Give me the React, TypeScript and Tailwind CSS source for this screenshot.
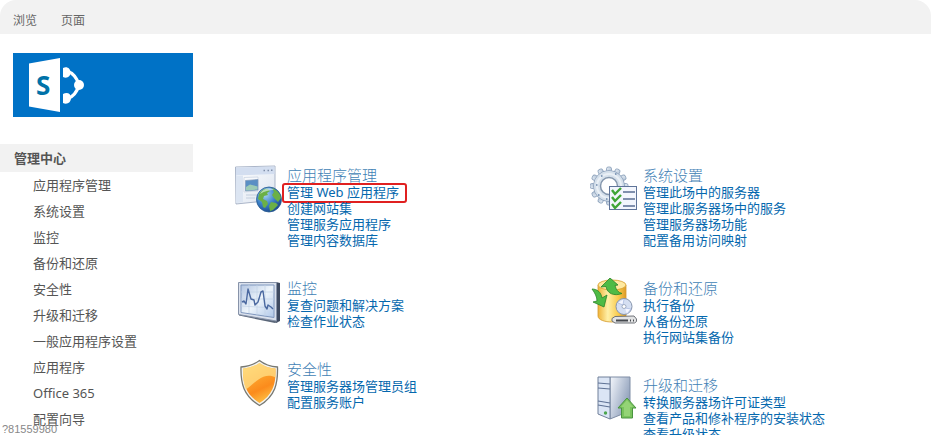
import type { ReactNode } from 'react';

interface AdminLink {
    name: string;
    marked?: boolean;
}

interface AdminSection {
    title: string;
    icon: () => ReactNode;
    links: AdminLink[];
}

const SharePointLogo = () => (
    <svg viewBox="0 0 180 64" className="block w-full" role="img" aria-label="SharePoint">
        <rect width="180" height="64" fill="#0072c6" />
        <path d="M16 10.5 47 5v54L16 53.5Z" fill="#fff" />
        <text x="23" y="41.500" fontSize="26" fill="#0072a8" className="font-['Open_Sans',sans-serif] font-bold">S</text>
        <path d="M54 18c6 2 10 7 12 14-2 7-6 12-12 14" fill="none" stroke="#fff" strokeWidth="3.200" />
        <path d="M50 15c4-2 7.500.5 7.500 4.500s-3.500 6.500-7.500 4.500ZM50 41c4-2.500 8-.5 8 4s-4 7-8 5Z" fill="#fff" />
        <circle cx="66" cy="32" r="5" fill="#fff" />
    </svg>
);

const AppManagementIcon = () => (
    <svg viewBox="0 0 48 48" className="block size-12" aria-hidden="true">
        <defs>
            <linearGradient id="win" x1="0" y1="0" x2="1" y2="1">
                <stop offset="0" stopColor="#fff" />
                <stop offset="1" stopColor="#dbe3ef" />
            </linearGradient>
            <radialGradient id="globe" cx=".35" cy=".3" r=".8">
                <stop offset="0" stopColor="#a9d6f5" />
                <stop offset=".5" stopColor="#3d82c8" />
                <stop offset="1" stopColor="#153f83" />
            </radialGradient>
        </defs>
        <path d="M1.500 2 41 1v34L2 39Z" fill="url(#win)" stroke="#aab5c8" />
        <path d="M2 2.500 40.500 1.500V9L2 10.500Z" fill="#d3def0" />
        <path d="M29.500 5.500h1.500M33.500 5.500h1.500M37 5.300h1.500" stroke="#7f8ea8" strokeWidth="1.500" />
        <path d="M2 11v27l7-.7V10.500Z" fill="#dce5f2" />
        <path d="M10 12.500 24 12v14L10 27Z" fill="#f7f9fc" stroke="#c0cbdb" strokeWidth=".6" />
        <path d="M11.500 15.500 24 14.500v10.500L11.500 26Z" fill="#5a8fc4" stroke="#8198b8" strokeWidth=".7" />
        <path d="m12 22 4-2.500 7.500 2v3L12 25.500Z" fill="#9ccbb4" />
        <path d="M12 30h11M12 33h9" stroke="#c3cedd" />
        <circle cx="35" cy="34.500" r="12.500" fill="url(#globe)" stroke="#275b91" strokeWidth=".8" />
        <path
            d="M25 29c2-4 6-6 9-5l2 2-3 2 1 2-4 1-1 3 4 2 1 3-3 4-2-1-1-5-4-3ZM38 23c5 2 8 5 9 10l-3 4-4-4-2-3 2-3ZM37 37l5 1 2 2-5 5-3 1-1-5Z"
            fill="#6bb046"
        />
        <path d="M26 29c3-6 10-7 14-4-5 0-9 1-14 4Z" fill="#e5f6ff" opacity=".6" />
    </svg>
);

const MonitoringIcon = () => (
    <svg viewBox="0 0 48 48" className="block size-12" aria-hidden="true">
        <defs>
            <linearGradient id="screen" x1="0" y1="0" x2="1" y2="1">
                <stop offset="0" stopColor="#b4c6e2" />
                <stop offset=".5" stopColor="#eef5fb" />
                <stop offset="1" stopColor="#b0c7e8" />
            </linearGradient>
        </defs>
        <path d="m42 4 4 1v38l-4 2Z" fill="#3e4a60" />
        <path d="m5 35.500 37 7 2 1.500-3 1L5 37.500Z" fill="#5a6678" />
        <path d="M4.500 4.500h38V43l-38-6.500Z" fill="#dae1ed" stroke="#8793a9" />
        <path d="M7 7h33v32.500L7 34.500Z" fill="url(#screen)" stroke="#8098be" />
        <path d="M7 14h33M7 21h33M7 28l33 2M15 7v28M23 7v30M31 7v31" stroke="#c0d1e5" strokeWidth=".7" />
        <path
            d="m8 24 2-1 2 3 2-15 3 10 3 1 1 5 3-3 3-10 2-1 2 15 2 3 1-4 3 2 2 2"
            fill="none"
            stroke="#4b69a0"
            strokeWidth="1.400"
            strokeLinejoin="round"
        />
    </svg>
);

const SecurityIcon = () => (
    <svg viewBox="0 0 48 48" className="block size-12" aria-hidden="true">
        <defs>
            <linearGradient id="shield" x1="0" y1="0" x2=".4" y2="1">
                <stop offset="0" stopColor="#ffd25c" />
                <stop offset=".4" stopColor="#fda62f" />
                <stop offset=".75" stopColor="#fb8b1c" />
                <stop offset="1" stopColor="#fdb53c" />
            </linearGradient>
        </defs>
        <path
            d="M25.500 1.500c5 4 11 6 18 6.500.5 16-2 29-18 38.500C9.500 37 6.500 24 7 8c7-.5 13-2.500 18.500-6.500Z"
            fill="#f2f2ee"
            stroke="#777872"
            strokeWidth="1.300"
        />
        <path d="M25.500 4c5 3.500 10 5 16 5.500.5 14-2 26-16 34.500C11.500 35.500 8.500 24 9 9.500c6-.5 11.500-2 16.500-5.500Z" fill="url(#shield)" />
        <path d="M25.500 4c5 3.500 10 5 16 5.500v9c-5-3-12-2-17 2-6 4-9 8-13 10-2-6-2.500-13-2.500-21 6-.5 11.500-2 16.500-5.500Z" fill="#ffe08a" opacity=".75" />
    </svg>
);

const SystemSettingsIcon = () => (
    <svg viewBox="0 0 48 48" className="block size-12" aria-hidden="true">
        <defs>
            <linearGradient id="gear" x1="0" y1="0" x2="1" y2="1">
                <stop offset="0" stopColor="#e9f0f7" />
                <stop offset="1" stopColor="#a3b6cc" />
            </linearGradient>
        </defs>
        {/* 12 rounded teeth round the rim */}
        <g fill="url(#gear)" stroke="#8ea3bc" strokeWidth=".9" transform="translate(19 21)">
            {[0, 30, 60, 90, 120, 150, 180, 210, 240, 270, 300, 330].map((angle) => (
                <rect key={angle} x="-2.500" y="-19" width="5" height="7" rx="1.800" transform={`rotate(${angle})`} />
            ))}
            <circle r="15.500" />
        </g>
        <circle cx="19" cy="21" r="14.800" fill="#d5e0eb" />
        <circle cx="19" cy="21" r="12" fill="none" stroke="#eaf0f6" strokeWidth="2" />
        <circle cx="19" cy="21" r="8.500" fill="#fff" stroke="#8597ad" strokeWidth="1.500" />
        <path d="M11 11h1.500M25 9h1.500M6 20h1.500M8 30h1.500M16 34h1.500" stroke="#6a86ab" strokeWidth="1.600" />
        <rect x="19.500" y="21.500" width="27" height="23" fill="#f3f6fd" stroke="#5f7499" />
        <path d="M33 27h12M33 34h12M33 41h12" stroke="#5a6e92" strokeWidth="1.300" />
        <path d="m22 25 3 4 6-6M22 32l3 4 6-6M22 39l3 4 6-6" fill="none" stroke="#3fa535" strokeWidth="2.400" />
    </svg>
);

const BackupIcon = () => (
    <svg viewBox="0 0 48 48" className="block size-12" aria-hidden="true">
        <defs>
            <linearGradient id="drum">
                <stop offset="0" stopColor="#efb338" />
                <stop offset=".35" stopColor="#fff0a8" />
                <stop offset=".75" stopColor="#f8c846" />
                <stop offset="1" stopColor="#dd9a28" />
            </linearGradient>
        </defs>
        <path d="M8 7v31c0 8 28 8 28 0V7Z" fill="url(#drum)" stroke="#d49a30" strokeWidth=".8" />
        <ellipse cx="22" cy="7" rx="14" ry="5" fill="#ffe9a0" stroke="#d69c2b" strokeWidth=".8" />
        <path d="m20 0 8 7-3 .5c1 4 3 7 7 8-8 3-15 0-16-7l-5 .5Z" fill="#4fbb45" stroke="#2a8428" strokeWidth=".8" />
        <path d="M2 11c5 0 9 3 10 9l5-3-3 12-11-5 4-1c0-4-2-8-5-12Z" fill="#4fbb45" stroke="#2a8428" strokeWidth=".8" />
        <circle cx="34" cy="28.500" r="8" fill="#d5dff2" stroke="#8795ad" />
        <path d="m28 25 5 2 1-6M35 30l6 1-4 5" fill="#f4f6ff" stroke="#a4b5dd" strokeWidth=".7" />
        <circle cx="34" cy="28.500" r="2" fill="#fff" stroke="#8795ad" strokeWidth=".7" />
        <path d="m25 38.500 19-.5 2.500 3v2.500L44.500 45H25l-3-2v-2.500Z" fill="#e2e3e4" stroke="#6f7278" />
        <path d="M26 42.500h12M40 42.500h1M43 42.500h1" stroke="#45494e" strokeWidth="1.800" />
    </svg>
);

const UpgradeIcon = () => (
    <svg viewBox="0 0 48 48" className="block size-12" aria-hidden="true">
        <defs>
            <linearGradient id="tower" x1="0" y1="0" x2="1" y2=".6">
                <stop offset="0" stopColor="#f4f7fc" />
                <stop offset="1" stopColor="#8b9cb8" />
            </linearGradient>
        </defs>
        <path d="M20 2h20v34l-20 8Z" fill="url(#tower)" stroke="#7f8da5" />
        <path d="M8 2h12v42L8 39Z" fill="#dbe5f5" stroke="#71809a" />
        <path d="m8 8 12 1M8 13l12 1M8 26l12 2M8 30l12 2" stroke="#5f7295" strokeWidth="1.200" />
        <circle cx="15.500" cy="38" r="1.700" fill="#4ca64d" />
        <path d="m37 23 9 10h-3.500v10h-11V33H28Z" fill="#79c35d" stroke="#4a9440" />
        <path d="m37 25 6 7h-3v9h-6v-9h-3Z" fill="#a6df87" opacity=".6" />
    </svg>
);

const ribbonTabs = ['浏览', '页面'];

const navItems = [
    '应用程序管理',
    '系统设置',
    '监控',
    '备份和还原',
    '安全性',
    '升级和迁移',
    '一般应用程序设置',
    '应用程序',
    'Office 365',
    '配置向导',
];

const leftSections: AdminSection[] = [
    {
        title: '应用程序管理',
        icon: AppManagementIcon,
        links: [
            { name: '管理 Web 应用程序', marked: true },
            { name: '创建网站集' },
            { name: '管理服务应用程序' },
            { name: '管理内容数据库' },
        ],
    },
    {
        title: '监控',
        icon: MonitoringIcon,
        links: [{ name: '复查问题和解决方案' }, { name: '检查作业状态' }],
    },
    {
        title: '安全性',
        icon: SecurityIcon,
        links: [{ name: '管理服务器场管理员组' }, { name: '配置服务账户' }],
    },
];

const rightSections: AdminSection[] = [
    {
        title: '系统设置',
        icon: SystemSettingsIcon,
        links: [
            { name: '管理此场中的服务器' },
            { name: '管理此服务器场中的服务' },
            { name: '管理服务器场功能' },
            { name: '配置备用访问映射' },
        ],
    },
    {
        title: '备份和还原',
        icon: BackupIcon,
        links: [{ name: '执行备份' }, { name: '从备份还原' }, { name: '执行网站集备份' }],
    },
    {
        title: '升级和迁移',
        icon: UpgradeIcon,
        links: [
            { name: '转换服务器场许可证类型' },
            { name: '查看产品和修补程序的安装状态' },
            { name: '查看升级状态' },
        ],
    },
];

const Section = ({ section }: { section: AdminSection }) => (
    <section className="flex gap-[5px]">
        <div className="shrink-0">
            <section.icon />
        </div>
        <div className="pt-px">
            <h2 className="text-[15px] leading-[18px] font-light">
                <a href="#" className="text-[#3f7fb5]">{section.title}</a>
            </h2>
            <ul className="text-[13px] leading-4">
                {section.links.map((link) => (
                    <li key={link.name}>
                        <a href="#" className="relative block w-fit whitespace-nowrap text-[#0568ae]">
                            {link.name}
                            {link.marked && (
                                <span className="absolute -top-px -right-2 -bottom-[3px] -left-[5px] rounded-[3px] border-2 border-[#e02020]" />
                            )}
                        </a>
                    </li>
                ))}
            </ul>
        </div>
    </section>
);

const SectionColumn = ({ sections }: { sections: AdminSection[] }) => (
    <div className="flex flex-col gap-[30px]">
        {sections.map((section) => (
            <Section key={section.title} section={section} />
        ))}
    </div>
);

export default function App() {
    return (
        <div className="relative h-screen overflow-hidden bg-white font-['Noto_Sans','Noto_Sans_CJK_SC',sans-serif] text-[#555]">
            {/* Ribbon */}
            <header className="flex gap-6 rounded-t-2xl bg-[#f2f2f2] px-[13px] pt-3 pb-1 text-xs leading-[18px] text-[#666]">
                {ribbonTabs.map((tab) => (
                    <button key={tab} type="button">{tab}</button>
                ))}
            </header>

            <div className="flex pt-[19px]">
                {/* Left navigation */}
                <aside className="w-[193px] shrink-0">
                    <a href="#" className="block pl-[13px]">
                        <SharePointLogo />
                    </a>
                    <nav className="mt-[27px] text-[13px] leading-[26px]">
                        <a href="#" className="block bg-[#f2f2f2] pl-[14px] leading-7 font-bold">管理中心</a>
                        <ul>
                            {navItems.map((item) => (
                                <li key={item}>
                                    <a href="#" className="block pl-[33px]">{item}</a>
                                </li>
                            ))}
                        </ul>
                    </nav>
                </aside>

                <main className="grid flex-1 grid-cols-2 gap-[15px] pt-28 pl-[41px]">
                    <SectionColumn sections={leftSections} />
                    <SectionColumn sections={rightSections} />
                </main>
            </div>

            {/* Watermark */}
            <span className="absolute bottom-0 left-[2px] font-['Liberation_Sans',sans-serif] text-[11px] leading-3 text-[#888]">
                ?81559980
            </span>
        </div>
    );
}
